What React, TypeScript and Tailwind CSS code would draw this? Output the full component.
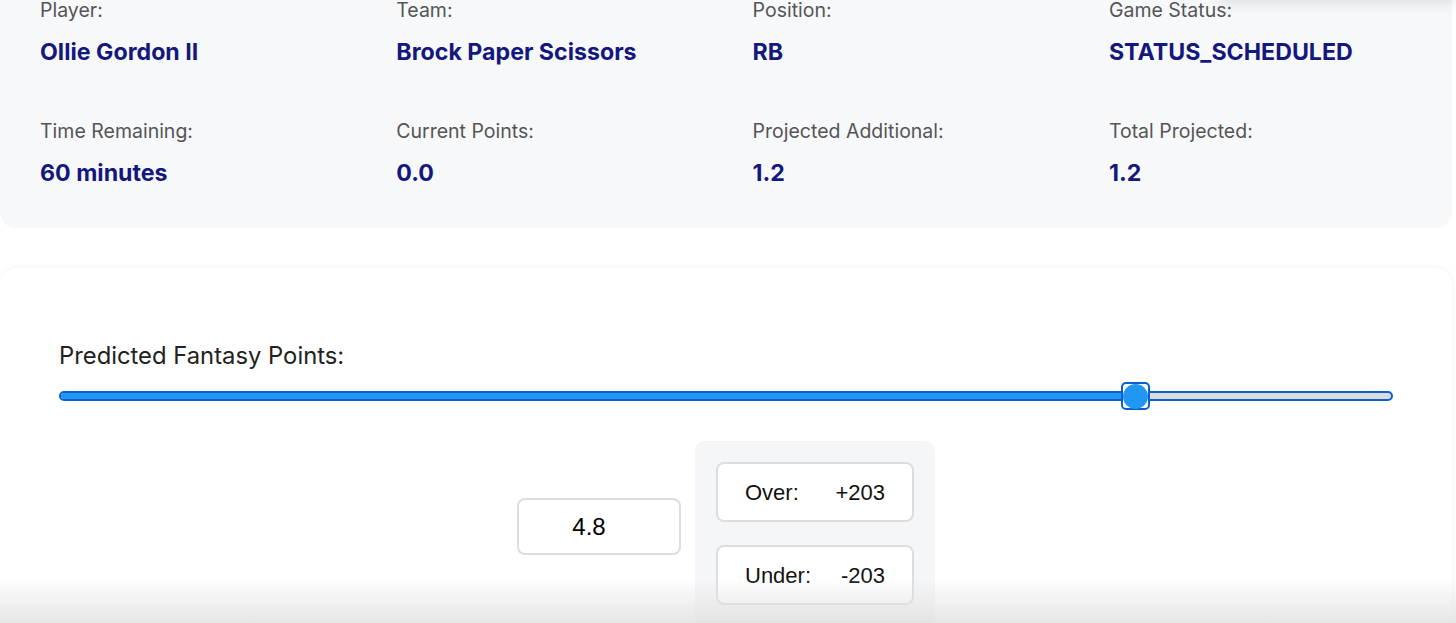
import React from "react";

const inter = { fontFamily: "Inter, 'Noto Sans', sans-serif" };

function Stat({ label, value }: { label: string; value: string }) {
  return (
    <div className="flex flex-col">
      <div className="text-[19.5px] leading-[24px] text-[#555555]">{label}</div>
      <div className="mt-[15px] text-[23.2px] leading-[30px] font-bold text-[#14187c]">{value}</div>
    </div>
  );
}

export default function App() {
  const pct = 80.7;
  return (
    <div
      className="relative w-[1456px] h-[623px] overflow-hidden bg-white"
      style={inter}
    >
      {/* faint shadow at top right */}
      <div className="absolute right-0 top-[-40px] w-[240px] h-[40px] rounded-bl-xl bg-white shadow-[0_4px_14px_rgba(0,0,0,0.10)] z-10" />

      {/* info card */}
      <div className="w-[1452px] mt-[-22px] rounded-[16px] bg-[#f7f8fa] pt-[20px] pb-[40px] pl-[40px]">
        <div className="grid grid-cols-[repeat(4,356.3px)] gap-y-[52px]">
          <Stat label="Player:" value="Ollie Gordon II" />
          <Stat label="Team:" value="Brock Paper Scissors" />
          <Stat label="Position:" value="RB" />
          <Stat label="Game Status:" value="STATUS_SCHEDULED" />
          <Stat label="Time Remaining:" value="60 minutes" />
          <Stat label="Current Points:" value="0.0" />
          <Stat label="Projected Additional:" value="1.2" />
          <Stat label="Total Projected:" value="1.2" />
        </div>
      </div>

      {/* prediction card */}
      <div className="w-[1452px] mt-[40px] rounded-[16px] bg-white shadow-[0_0_6px_rgba(0,0,0,0.06)] pt-[72px] px-[59px] pb-[40px]">
        <div className="text-[23.8px] leading-[32px] text-[#222222]">Predicted Fantasy Points:</div>

        <div className="relative mt-[10px] h-[28px] flex items-center">
          <div className="relative w-full h-[10px] rounded-full border-2 border-[#0a5fd0] bg-[#dcdcdc] overflow-hidden">
            <div className="h-full bg-[#2196f3]" style={{ width: `${pct}%` }} />
          </div>
          <div
            className="absolute top-0 w-[29px] h-[28px] -ml-[15px] rounded-[5px] border-2 border-[#0a5fd0] bg-white flex items-center justify-center"
            style={{ left: `${pct}%` }}
          >
            <div className="w-[25px] h-[25px] rounded-full bg-[#2196f3]" />
          </div>
        </div>

        <div
          className="mt-[31px] flex justify-center gap-[14px] mr-[-59px] ml-[-59px]"
          style={{ fontFamily: "'Liberation Sans', Arial, sans-serif" }}
        >
          <div className="mt-[57px] w-[164px] h-[57px] rounded-[8px] border-2 border-[#dddddd] bg-white flex items-center justify-center pr-[20px] text-[24px] text-black">
            4.8
          </div>
          <div className="w-[240px] rounded-[10px] bg-[#f5f6f8] p-[21px] flex flex-col gap-[23px]">
            <div className="h-[60px] rounded-[8px] border-2 border-[#dddddd] bg-white flex items-center justify-between px-[27px] text-[22px] text-[#111111]">
              <span>Over:</span>
              <span>+203</span>
            </div>
            <div className="h-[60px] rounded-[8px] border-2 border-[#dddddd] bg-white flex items-center justify-between px-[27px] text-[22px] text-[#111111]">
              <span>Under:</span>
              <span>-203</span>
            </div>
          </div>
        </div>
      </div>

      {/* bottom fade */}
      <div className="pointer-events-none absolute bottom-0 left-0 right-0 h-[45px] bg-gradient-to-b from-[rgba(235,235,235,0)] to-[rgba(225,225,225,0.85)]" />
    </div>
  );
}
